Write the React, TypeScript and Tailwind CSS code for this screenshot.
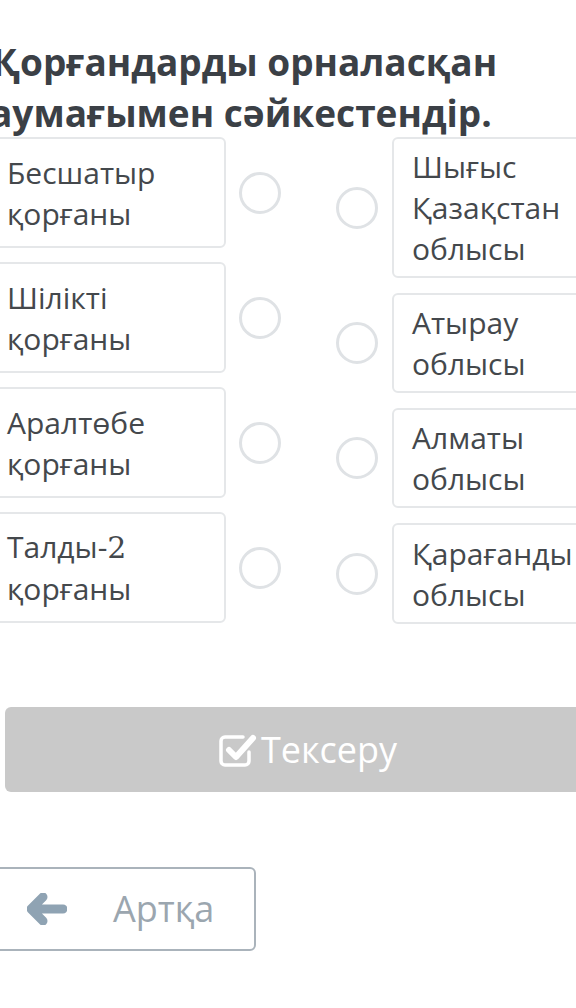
import React from 'react';

const leftItems = [
  ['Бесшатыр', 'қорғаны'],
  ['Шілікті', 'қорғаны'],
  ['Аралтөбе', 'қорғаны'],
  ['Талды-2', 'қорғаны'],
];

const rightItems = [
  { lines: ['Шығыс', 'Қазақстан', 'облысы'], h: 'h-[141px]' },
  { lines: ['Атырау', 'облысы'], h: 'h-[100px]' },
  { lines: ['Алматы', 'облысы'], h: 'h-[100px]' },
  { lines: ['Қарағанды', 'облысы'], h: 'h-[101px]' },
];

const Radio = () => (
  <div className="w-[42px] h-[42px] rounded-full border-[3px] border-[#dfe2e5] bg-white" />
);

const CheckSquare = () => (
  <svg width="38" height="36" viewBox="0 0 38 36" fill="none">
    <path
      d="M30 20v9a4 4 0 0 1-4 4H6a4 4 0 0 1-4-4V9a4 4 0 0 1 4-4h18"
      stroke="white"
      strokeWidth="3.5"
      strokeLinecap="round"
    />
    <path
      d="M10 18l7 7L34 6"
      stroke="white"
      strokeWidth="6"
      strokeLinecap="round"
      strokeLinejoin="round"
    />
  </svg>
);

const BackArrow = () => (
  <svg width="40" height="32" viewBox="0 0 40 32" fill="none">
    <path
      d="M16 4L4 16l12 12M4 16h32"
      stroke="#8fa3b3"
      strokeWidth="9"
      strokeLinecap="round"
      strokeLinejoin="round"
    />
  </svg>
);

const App: React.FC = () => {
  return (
    <div
      className="w-[576px] h-[1008px] overflow-hidden bg-white"
      style={{ fontFamily: '"Open Sans", "Noto Sans", sans-serif' }}
    >
      <div className="ml-[-12px] w-[660px]">
        <h1 className="pt-[36px] pl-[4px] text-[37px] leading-[51px] font-bold text-[#3b4046] whitespace-nowrap">
          Қорғандарды орналасқан
          <br />
          <span className="ml-[-2px]">аумағымен сәйкестендір.</span>
        </h1>

        <div className="flex flex-row mt-[-1px]">
          {/* left column */}
          <div className="flex flex-col gap-[14px] w-[238px]">
            {leftItems.map((lines) => (
              <div
                key={lines[0]}
                className="h-[111px] flex items-center pl-[17px] border-2 border-[#e5e7e9] rounded-md text-[30px] leading-[41px] text-[#44484c]"
              >
                <div>
                  {lines[0] === 'Талды-2' ? (
                    <>
                      Талды-<span style={{ fontFamily: '"DejaVu Serif", serif' }}>2</span>
                    </>
                  ) : (
                    lines[0]
                  )}
                  <br />
                  {lines[1]}
                </div>
              </div>
            ))}
          </div>

          {/* left radios */}
          <div className="flex flex-col gap-[14px] ml-[13px]">
            {leftItems.map((lines) => (
              <div key={lines[0]} className="h-[111px] flex items-center">
                <Radio />
              </div>
            ))}
          </div>

          {/* right radios */}
          <div className="flex flex-col gap-[15px] ml-[55px]">
            {rightItems.map((it) => (
              <div key={it.lines[0]} className={`${it.h} flex items-center`}>
                <Radio />
              </div>
            ))}
          </div>

          {/* right column */}
          <div className="flex flex-col gap-[15px] ml-[14px] w-[240px]">
            {rightItems.map((it) => (
              <div
                key={it.lines[0]}
                className={`${it.h} flex items-center pl-[18px] border-2 border-[#e5e7e9] rounded-md text-[30px] leading-[41px] text-[#44484c]`}
              >
                <div className="whitespace-nowrap">
                  {it.lines.map((l) => (
                    <div key={l}>{l}</div>
                  ))}
                </div>
              </div>
            ))}
          </div>
        </div>

        <div className="mt-[83px] ml-[17px] w-[606px] h-[85px] rounded-md bg-[#c9c9c9] flex items-center justify-center gap-[4px] text-white text-[36px]">
          <CheckSquare />
          <span>Тексеру</span>
        </div>

        <div className="mt-[75px] w-[268px] h-[84px] rounded-md border-2 border-[#aab3bb] flex items-center pl-[37px] gap-[46px] text-[#9ba6af] text-[36px]">
          <BackArrow />
          <span>Артқа</span>
        </div>
      </div>
    </div>
  );
};

export default App;
